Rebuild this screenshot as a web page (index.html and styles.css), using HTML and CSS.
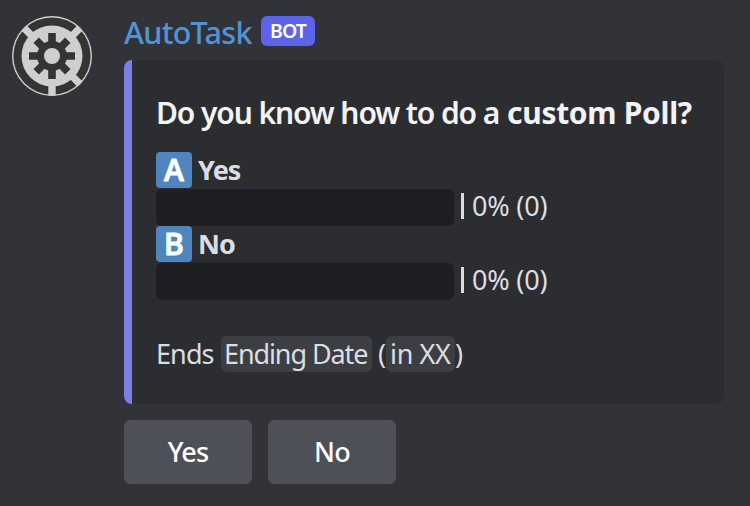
FILE: index.html
```html
<!DOCTYPE html>
<html lang="en">
<head>
<meta charset="utf-8">
<title>AutoTask poll</title>
<link rel="stylesheet" href="styles.css">
</head>
<body>
<article class="message">
  <svg class="avatar" viewBox="-40 -40 80 80" aria-hidden="true">
    <circle r="40" fill="#cfcfcf"/>
    <circle r="38.6" fill="#343434"/>
    <circle r="30.5" fill="#cfcfcf"/>
    <g stroke="#cfcfcf" stroke-width="7.4">
      <path d="M0 28V39.5M-20-20L-27.8-27.8M20-20L27.8-27.8M20 20L27.8 27.8"/>
    </g>
    <g stroke="#343434" stroke-width="7.6">
      <path d="M0-23V23M-23 0H23M-15.8-15.8L15.8 15.8M15.8-15.8L-15.8 15.8"/>
    </g>
    <circle r="15" fill="#343434"/>
    <circle r="8" fill="#cfcfcf"/>
  </svg>
  <div class="content">
    <header class="head"><span class="name">AutoTask</span><span class="tag">BOT</span></header>
    <section class="embed">
      <h1 class="title"><span class="lead">Do you know how to do a</span> <strong class="strong">custom Poll?</strong></h1>
      <div class="option"><span class="letter">A</span><b class="label">Yes</b></div>
      <div class="result"><span class="bar"></span><span class="pipe"></span><span class="count">0% (0)</span></div>
      <div class="option"><span class="letter">B</span><b class="label">No</b></div>
      <div class="result"><span class="bar"></span><span class="pipe"></span><span class="count">0% (0)</span></div>
      <p class="ends"><span class="word">Ends</span><span class="time date">Ending Date</span><span class="paren">(</span><span class="time rel">in XX</span><span class="paren">)</span></p>
    </section>
    <div class="actions"><button class="button">Yes</button><button class="button">No</button></div>
  </div>
</article>
</body>
</html>
```
FILE: styles.css
```css
* { box-sizing: border-box; }
body {
  margin: 0;
  height: 506px;
  overflow: hidden;
  background: #323338;
  color: #dbdee1;
  font-family: "Noto Sans", "Open Sans", sans-serif;
  font-size: 27px;
}
.message { display: flex; gap: 32px; padding: 16px 26px 0 12px; }
.avatar { width: 80px; height: 80px; flex: none; }
.content { width: 600px; }
.head { display: flex; height: 44px; gap: 9px; }
.name { color: #4f95d6; font-size: 30.5px; font-weight: 500; line-height: 33px; width: 128px; white-space: nowrap; letter-spacing: -0.7px; }
.tag {
  width: 54px; height: 30px; border-radius: 6px; background: #5c64ea;
  color: #fff; font-size: 19.5px; font-weight: 600; line-height: 30px; text-align: center;
  letter-spacing: -0.9px;
}
.embed {
  height: 344px; padding: 32px 0 0 24px; border-left: 8px solid #7a80e8;
  border-radius: 8px; background: #2c2d31;
}
.title {
  display: flex; margin: 0 0 16px; height: 44px; line-height: 42px;
  color: #f2f3f5; font-size: 30px; font-weight: 600; white-space: nowrap; letter-spacing: -1.1px;
}
.lead { width: 351px; }
.strong { font-weight: 700; letter-spacing: -0.3px; }
.option, .result { display: flex; align-items: center; height: 37px; }
.letter {
  width: 36px; height: 36px; margin-bottom: 1px; border-radius: 4px; background: #4f86bf; color: #fff;
  font-family: "Open Sans", sans-serif; font-size: 30px; font-weight: 600; line-height: 35px; text-align: center;
  -webkit-text-stroke: 1px #fff; paint-order: stroke; stroke-linejoin: round;
}
.label { margin: 0 0 2px 6px; letter-spacing: -0.9px; }
.bar { width: 298px; height: 37px; border-radius: 6px; background: #1e1f22; }
.pipe { width: 3px; height: 26px; margin: 0 8px 4px 7px; background: #dbdee1; }
.count { margin-bottom: 4px; letter-spacing: -0.2px; }
.ends { display: flex; height: 36px; margin: 36px 0 0; line-height: 36px; white-space: nowrap; }
.word { width: 65px; letter-spacing: -0.9px; }
.time { height: 36px; border-radius: 6px; background: #3d3e43; padding-left: 3px; }
.date { width: 151px; margin-right: 6px; letter-spacing: -1.1px; }
.rel { width: 69px; padding-left: 4px; letter-spacing: -0.4px; }
.actions { display: flex; gap: 16px; margin-top: 16px; }
.button {
  width: 128px; height: 64px; padding: 0; border: 0; border-radius: 6px;
  background: #4e5058; color: #fff; font: 500 27px/64px "Noto Sans", sans-serif; letter-spacing: -0.8px;
}
```
